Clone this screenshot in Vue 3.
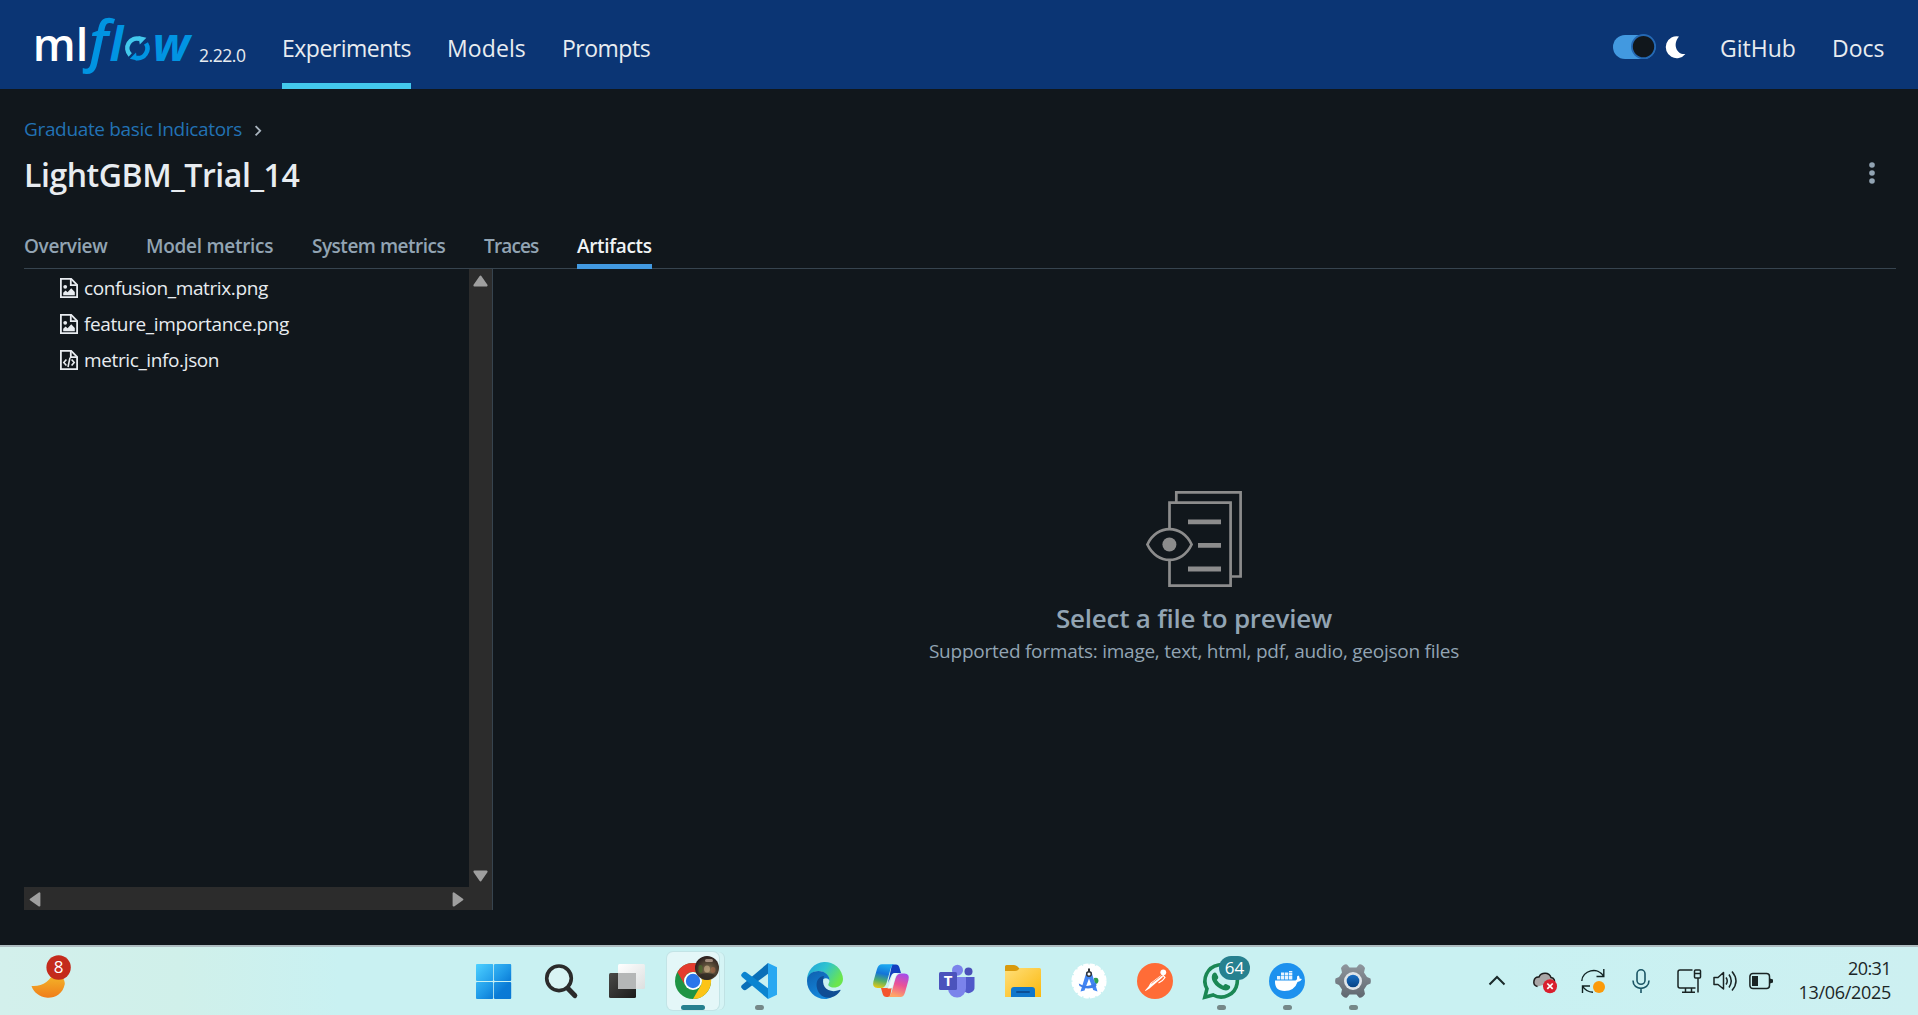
<script setup>
const nav = [
  { label: 'Experiments', cls: 'n-exp', active: true },
  { label: 'Models', cls: 'n-mod' },
  { label: 'Prompts', cls: 'n-pro' },
]
const tabs = [
  { label: 'Overview', cls: 't-ove' },
  { label: 'Model metrics', cls: 't-mod' },
  { label: 'System metrics', cls: 't-sys' },
  { label: 'Traces', cls: 't-tra' },
  { label: 'Artifacts', cls: 't-art', active: true },
]
const files = [
  { name: 'confusion_matrix.png', kind: 'image' },
  { name: 'feature_importance.png', kind: 'image' },
  { name: 'metric_info.json', kind: 'code' },
]
</script>

<template>
  <div class="screen">
    <header class="topbar">
      <svg class="logo" width="166" height="89" viewBox="30 0 166 89">
        <text class="lg ml" x="32.8" y="60.7" textLength="55.5" lengthAdjust="spacingAndGlyphs">ml</text>
        <text class="lg f" x="89" y="61.2">f</text>
        <text class="lg l" x="109.5" y="60.7">l</text>
        <g fill="none" stroke-width="4.6">
          <path d="M130.2 55A9.7 9.7 0 0 1 140 38.9" stroke="#43c9ed" />
          <path d="M146 43.4A9.7 9.7 0 0 1 135.8 57.9" stroke="#0194e2" />
        </g>
        <path d="M138.4 36L146.4 37.8L139.8 44.4z" fill="#43c9ed" />
        <path d="M137.2 60.6L129.8 58.8L136 52.4z" fill="#0194e2" />
        <text class="lg w" x="152.5" y="60.7" textLength="37.4" lengthAdjust="spacingAndGlyphs">w</text>
      </svg>
      <span class="version">2.22.0</span>
      <nav class="nav">
        <a v-for="n in nav" :key="n.label" :class="[n.cls, { active: n.active }]">{{ n.label }}</a>
      </nav>
      <div class="right">
        <svg width="74" height="89" viewBox="1612 0 74 89">
          <rect x="1613" y="35" width="42.5" height="24" rx="12" fill="#4299e0" />
          <circle cx="1643.5" cy="46.6" r="11.6" fill="#11171c" stroke="#2468b3" stroke-width="1.8" />
          <path d="M1679 36.4A11 11 0 1 0 1685.4 54C1677 55.2 1672 44.2 1679 36.4z" fill="#fff" />
        </svg>
        <a class="n-git">GitHub</a>
        <a class="n-doc">Docs</a>
      </div>
    </header>

    <main class="page">
      <div class="crumb">
        <a>Graduate basic Indicators</a>
        <svg width="8" height="12" viewBox="0 0 8 12"><path d="M1.6 1.2L6.2 5.8L1.6 10.4" fill="none" stroke="#aab5bf" stroke-width="1.8" /></svg>
      </div>
      <div class="title-row">
        <h1>LightGBM_Trial_14</h1>
        <svg class="kebab" width="8" height="24" viewBox="0 0 8 24" fill="#92a4b3"><circle cx="4" cy="4" r="2.8" /><circle cx="4" cy="12" r="2.8" /><circle cx="4" cy="20" r="2.8" /></svg>
      </div>
      <div class="tabs">
        <a v-for="t in tabs" :key="t.label" :class="[t.cls, { active: t.active }]">{{ t.label }}</a>
      </div>

      <section class="split">
        <div class="tree">
          <div class="tree-main">
            <ul>
              <li v-for="f in files" :key="f.name">
                <svg width="18" height="20" viewBox="0 0 18 20" fill="none" stroke="#e8ecf0" stroke-width="1.8">
                  <path d="M0.9 0.9H11.2L17.1 6.8V19.1H0.9z" />
                  <path d="M10.8 1V7.2H17" />
                  <template v-if="f.kind === 'image'">
                    <path d="M3.2 17.2V14.8L5.6 12.6L7.6 14.2L11.2 10.2L14.8 14V17.2z" fill="#e8ecf0" stroke="none" />
                    <circle cx="5.2" cy="8.8" r="1.9" fill="#e8ecf0" stroke="none" />
                  </template>
                  <path v-else d="M6.4 9.4L3.8 12.4L6.4 15.4M11.6 9.4L14.2 12.4L11.6 15.4M10 7.6L8 17" stroke-width="1.6" />
                </svg>
                <span>{{ f.name }}</span>
              </li>
            </ul>
            <div class="vbar">
              <svg width="15" height="12" viewBox="0 0 15 12"><path d="M7.5 1.6L13.6 10.4H1.4z" /></svg>
              <svg width="15" height="12" viewBox="0 0 15 12"><path d="M7.5 10.4L13.6 1.6H1.4z" /></svg>
            </div>
          </div>
          <div class="hbar">
            <svg width="12" height="15" viewBox="0 0 12 15"><path d="M1.6 7.5L10.4 1.4V13.6z" /></svg>
            <svg width="12" height="15" viewBox="0 0 12 15"><path d="M10.4 7.5L1.6 1.4V13.6z" /></svg>
          </div>
        </div>

        <div class="preview">
          <svg width="96" height="96" viewBox="0 0 96 96" fill="none" stroke="#8c8c8c" stroke-width="2.7">
            <path d="M30.3 11V1.4H94.6V85.5H86" />
            <path d="M23.5 38V11.7H84.6V94.6H23.5V69" />
            <path d="M1.4 53.5C11 33 36 33 45.6 53.5C36 74 11 74 1.4 53.5z" />
            <circle cx="23.4" cy="53.5" r="7" fill="#8c8c8c" stroke="none" />
            <path d="M42 30.8H75M52 54.4H75M42 78H75" stroke-width="4.8" />
          </svg>
          <h2>Select a file to preview</h2>
          <p>Supported formats: image, text, html, pdf, audio, geojson files</p>
        </div>
      </section>
    </main>

    <footer class="taskbar">
      <div class="weather">
        <svg width="48" height="48" viewBox="28 953 48 48">
          <defs>
            <linearGradient id="moon" x1="0" y1="0" x2="0" y2="1"><stop offset="0" stop-color="#f3c02c" /><stop offset="1" stop-color="#f07d1a" /></linearGradient>
          </defs>
          <path d="M31.5 986C42 987 51 981 54 971C62 974 65 980 64.8 984C63 994 55 998 47.5 997.7C39 997 33.5 992 31.5 986z" fill="url(#moon)" />
          <circle cx="58.6" cy="967.5" r="12.2" fill="#c42b1c" />
          <text x="58.6" y="973" class="b8">8</text>
        </svg>
      </div>

      <div class="apps">
        <div class="cell">
          <svg width="36" height="36" viewBox="0 0 36 36">
            <defs>
              <linearGradient id="win" gradientUnits="userSpaceOnUse" x1="0" y1="1" x2="34" y2="36"><stop offset="0" stop-color="#4ccfff" /><stop offset=".5" stop-color="#1f9ae8" /><stop offset=".75" stop-color="#0a7bd6" /><stop offset="1" stop-color="#0a78d4" /></linearGradient>
            </defs>
            <g fill="url(#win)"><rect x="-1" y="1" width="17.2" height="17" rx="1" /><rect x="17" y="1" width="17.2" height="17" rx="1" /><rect x="-1" y="19" width="17.2" height="17" rx="1" /><rect x="17" y="19" width="17.2" height="17" rx="1" /></g>
          </svg>
        </div>
        <div class="cell">
          <svg width="36" height="36" viewBox="0 0 36 36" fill="none" stroke="#2b2b2b">
            <path d="M24.5 25L31.8 32.6" stroke-width="5" stroke-linecap="round" />
            <circle cx="16" cy="15.3" r="12.3" stroke-width="3.6" fill="#dff5f5" fill-opacity=".7" />
          </svg>
        </div>
        <div class="cell">
          <svg width="36" height="36" viewBox="0 0 36 36">
            <defs>
              <linearGradient id="tv" x1="0" y1="0" x2="1" y2="1"><stop offset="0" stop-color="#4a4a48" /><stop offset="1" stop-color="#1b1b1a" /></linearGradient>
              <linearGradient id="tw" x1="0" y1="0" x2="1" y2="1"><stop offset="0" stop-color="#fff" /><stop offset="1" stop-color="#dcdfdf" /></linearGradient>
            </defs>
            <rect x="0" y="10" width="27" height="25" rx="1.5" fill="url(#tv)" />
            <rect x="9" y="1" width="27" height="25" rx="1.5" fill="url(#tw)" />
            <rect x="9" y="10" width="18" height="16" fill="#b5b7b7" />
          </svg>
        </div>
        <div class="cell current">
          <svg width="36" height="36" viewBox="0 0 36 36">
            <defs>
              <radialGradient id="ph" cx=".55" cy=".6" r=".6"><stop offset="0" stop-color="#8f7c58" /><stop offset=".45" stop-color="#5a4c38" /><stop offset="1" stop-color="#2a1d1d" /></radialGradient>
            </defs>
            <circle cx="18" cy="18" r="18" fill="#1e9444" />
            <path d="M2.4 9A18 18 0 0 1 33.6 9H18A9 9 0 0 0 10.2 22.5z" fill="#e33b2e" />
            <path d="M33.6 9A18 18 0 0 1 18 36L25.8 22.5A9 9 0 0 0 18 9z" fill="#fcc417" />
            <circle cx="18" cy="18" r="9" fill="#fff" />
            <circle cx="18" cy="18" r="7.2" fill="#2b76ea" />
            <circle cx="32" cy="5" r="12" fill="url(#ph)" />
            <rect x="23.5" y="2" width="4" height="8" rx="2" fill="#4c7a2c" opacity=".6" />
            <rect x="30" y="-4" width="8" height="3" rx="1.5" fill="#e2c8b8" opacity=".6" />
            <ellipse cx="32" cy="6" rx="3" ry="3.5" fill="#c5a885" opacity=".7" />
            <ellipse cx="38" cy="7" rx="2.5" ry="3" fill="#a8694a" opacity=".6" />
            <path d="M24 12Q32 8 40 12Q36 17 32 17Q27 17 24 12z" fill="#2a2420" opacity=".75" />
          </svg>
          <i class="bar"></i>
        </div>
        <div class="cell">
          <svg width="36" height="36" viewBox="0 0 36 36">
            <path d="M27 0L28 10L5.5 26.6Q3.5 28 1.5 26L.6 25Q-.5 23.5 1 22z" fill="#0a6fb8" />
            <path d="M27 36L28 26L5.500 9.400Q3.500 8 1.500 10L.6 11Q-.5 12.500 1 14z" fill="#0b84d0" />
            <path d="M27 0L36 4.200V31.800L27 36z" fill="#29a8f2" />
          </svg>
          <i></i>
        </div>
        <div class="cell">
          <svg width="36" height="36" viewBox="0 0 36 36">
            <defs>
              <linearGradient id="e1" x1="0" y1="0" x2="1" y2=".5"><stop offset="0" stop-color="#1fa0dc" /><stop offset=".5" stop-color="#2fc4cf" /><stop offset="1" stop-color="#6be64c" /></linearGradient>
              <linearGradient id="e2" x1="0" y1="0" x2=".5" y2="1"><stop offset="0" stop-color="#0e5fae" /><stop offset="1" stop-color="#1488dc" /></linearGradient>
            </defs>
            <path d="M0 18A18 18 0 0 1 36 16C36 22 31 24.500 27 24.500C23 24.500 20.500 22.500 21.500 21C25 15 19 8 11.500 8C6 8 1 12 0 18z" fill="url(#e1)" />
            <path d="M0 18C0 12 5 8 11.500 8C18 8 23 12.500 22.500 18C22 14.500 15.500 13.500 14 20C12.500 27 19 34 25 34C22 35.500 20 36 18 36C8 36 0 28 0 18z" fill="url(#e2)" />
            <path d="M17 13C8 14 8 25 13 31C18 37 28 36 33.500 27.500C33.700 26.500 33 26.500 32.500 27C22 31 13 24 17 13z" fill="#0f4d94" />
          </svg>
        </div>
        <div class="cell">
          <svg width="36" height="36" viewBox="0 0 36 36">
            <defs>
              <linearGradient id="c1" x1=".3" y1="0" x2=".1" y2="1"><stop offset="0" stop-color="#1ba5ef" /><stop offset=".35" stop-color="#1474d8" /><stop offset=".65" stop-color="#4fae6a" /><stop offset="1" stop-color="#f7cc0b" /></linearGradient>
              <linearGradient id="c2" x1=".8" y1="0" x2=".5" y2="1"><stop offset="0" stop-color="#a04bee" /><stop offset=".5" stop-color="#ea5197" /><stop offset="1" stop-color="#ffa566" /></linearGradient>
            </defs>
            <path d="M19 1.500H23Q25.500 1.500 26.400 4.500L28 10H22Q19 10 18 13L15 20z" fill="#123fc0" />
            <path d="M17 34H13.500Q10.500 34 9.700 31L8 25H14Q17 25 18 22L20 17z" fill="#f4552f" />
            <path d="M9 1.300H21.500Q18.500 2 17.500 6L13.500 20Q12 25 8 25H4.500Q-1.200 25 .4 18.500L4 6Q5.300 1.300 9 1.300z" fill="url(#c1)" />
            <path d="M27.500 34H15Q17.500 33 18.500 29.500L22.500 15.500Q24 10.500 28 10.500H31.500Q37 10.500 35.500 17L32 29.500Q30.700 34 27.500 34z" fill="url(#c2)" />
            <path d="M19.500 11.500Q20.300 10 22 10H24.500Q22.800 12 22 15L19.500 24Q18.800 25.500 17 25.500H14.500Q16 23.500 16.800 20.500z" fill="#eefafa" />
          </svg>
        </div>
        <div class="cell">
          <svg width="36" height="36" viewBox="0 0 36 36">
            <circle cx="29.500" cy="8.500" r="4" fill="#4a50b8" />
            <path d="M25 14H35.500V23.500A6 6 0 0 1 25 28z" fill="#5059c9" />
            <circle cx="18.500" cy="7.200" r="5.500" fill="#7b83eb" />
            <path d="M9 14H27V25A9 9 0 0 1 9 26z" fill="#7b83eb" />
            <rect x="0" y="9" width="18" height="18" rx="1.500" fill="#4b53bc" />
            <text x="9" y="23.300" class="teams-t">T</text>
          </svg>
        </div>
        <div class="cell">
          <svg width="36" height="36" viewBox="0 0 36 36">
            <defs>
              <linearGradient id="fo" x1="0" y1="0" x2="1" y2="1"><stop offset="0" stop-color="#ffdf7a" /><stop offset="1" stop-color="#fbb80c" /></linearGradient>
            </defs>
            <path d="M0 3.500Q0 2 1.500 2H9Q11 2 12.500 3.500L15 6H34V12H0z" fill="#d99a0c" />
            <path d="M0 8H10Q12 8 13.500 6.500L15 5H34.500Q36 5 36 6.500V34H0z" fill="url(#fo)" />
            <path d="M6 34V27Q6 24 9 24H27Q30 24 30 27V34z" fill="#0f77cc" />
            <rect x="11" y="28" width="14" height="2" rx="1" fill="#0a4f96" />
          </svg>
        </div>
        <div class="cell">
          <svg width="36" height="36" viewBox="0 0 36 36">
            <circle cx="18" cy="18" r="16.500" fill="#fff" stroke="#fff" stroke-width="2.200" stroke-dasharray="5.200 1.300" />
            <path d="M23 15Q27.500 13.500 27.500 18Q27 21.500 23.500 21z" fill="#2fa04e" />
            <path d="M15.500 9H20.500L26.500 28.600L22.200 27L18 15.500L13.500 27.500L9.500 28.600z" fill="#4285f4" />
            <path d="M7.800 20.500Q17 26 25 19.500L25.500 23Q17 28 8.500 23z" fill="#3c7be8" />
            <rect x="17" y="5.500" width="2" height="4" fill="#30343a" />
            <circle cx="18" cy="11" r="2.300" fill="#fff" stroke="#30343a" stroke-width="1.500" />
          </svg>
        </div>
        <div class="cell">
          <svg width="36" height="36" viewBox="0 0 36 36">
            <circle cx="18" cy="18" r="18" fill="#ff6c37" />
            <circle cx="26.300" cy="9.300" r="2.900" fill="#fff" />
            <path d="M23.500 12.500L13.500 20L11.500 23.500L8 27.500L8.500 28L12.500 25.500L16 22.500L26.500 13.500z" fill="#fff" />
            <path d="M14.500 20.500L24.500 12.800" stroke="#ff6c37" stroke-width=".7" />
            <path d="M25 11L28 14.500Q26 18 21.500 20" fill="none" stroke="#fff" stroke-width="1.200" />
          </svg>
        </div>
        <div class="cell">
          <svg width="36" height="36" viewBox="0 0 36 36">
            <path d="M1.800 34.200L4 25.800A16.200 16.200 0 1 1 10.200 32z" fill="none" stroke="#1a8754" stroke-width="3.600" />
            <path d="M10 10.500Q12 8.500 13.500 10.500L15.300 14Q15.500 15.500 13.800 17Q16 21 20.200 22.800Q21.800 20.500 23 21L27 23Q28 25 25.500 26.800Q22.500 28.500 17 25.500Q11 22 9.200 17Q8 13 10 10.500z" fill="#1a8754" />
            <rect x="16" y="-7" width="31" height="24" rx="12" fill="#26808f" />
            <text x="31.500" y="10.700" class="b64">64</text>
          </svg>
          <i></i>
        </div>
        <div class="cell">
          <svg width="36" height="36" viewBox="0 0 36 36">
            <circle cx="18" cy="18" r="18" fill="#1d91ee" />
            <path d="M6 17.500H26.500Q28.500 17 28 13.500L29.500 12.500Q31 14 30.500 15.500L33 16Q31.500 18.800 28.500 19Q25.500 28 15.500 28Q5.500 28 6 17.500z" fill="#fff" />
            <path d="M8 13H11.300V16.500H8zM12 13H15.300V16.500H12zM16 13H19.300V16.500H16zM20 13H23.300V16.500H20zM12 9.500H15.300V12.500H12zM16 9.500H19.300V12.500H16zM20 9.500H23.300V12.500H20zM20 8H23.300V9H20z" fill="#e6f3fe" />
          </svg>
          <i></i>
        </div>
        <div class="cell">
          <svg width="36" height="36" viewBox="0 0 36 36">
            <defs>
              <linearGradient id="ge" x1="0" y1="0" x2="0" y2="1"><stop offset="0" stop-color="#8f969d" /><stop offset="1" stop-color="#5f676f" /></linearGradient>
              <linearGradient id="gb" x1="0" y1="0" x2="0" y2="1"><stop offset="0" stop-color="#1a6fc4" /><stop offset="1" stop-color="#064384" /></linearGradient>
            </defs>
            <path d="M7.500 3Q9.500 .8 12 1.500L14.500 4.500H21.500L24 1.500Q26.500 .8 28.500 3L30 5L29 9.500L32 14L35.500 15.500Q36.300 18 35.500 20.500L32 22L29 26.500L30 31L28.500 33Q26.500 35.200 24 34.500L21.500 31.500H14.500L12 34.500Q9.500 35.200 7.500 33L6 31L7 26.500L4 22L.5 20.500Q-.3 18 .5 15.500L4 14L7 9.500L6 5z" fill="url(#ge)" />
            <circle cx="18" cy="18" r="9" fill="#dfe5e9" />
            <circle cx="18" cy="18" r="6.300" fill="url(#gb)" />
          </svg>
          <i></i>
        </div>
      </div>

      <div class="tray">
        <svg width="24" height="24" viewBox="0 0 24 24"><path d="M4.500 15.500L12 8L19.500 15.500" fill="none" stroke="#1a2a2a" stroke-width="2" /></svg>
        <svg class="g24" width="24" height="24" viewBox="0 0 24 24">
          <path d="M4.500 17.500C-1.500 16 .5 7.500 6 8C8 3.500 16 2.500 18 8.500C21.500 9 22 12 21 13" fill="#a9a6a6" stroke="#1c1c1c" stroke-width="1.500" />
          <circle cx="17" cy="17.200" r="7" fill="#d9202e" />
          <path d="M14.300 14.500L19.700 19.900M19.700 14.500L14.300 19.900" stroke="#fff" stroke-width="1.700" />
        </svg>
        <svg class="g24" width="24" height="24" viewBox="0 0 24 24" fill="none" stroke="#122" stroke-width="1.400">
          <path d="M.8 12C1 1.500 17 -3 22.800 7.500M22.800 0V7.500H15.500M1.500 24V17H9M1.500 17Q5 23 12 23.300" />
          <circle cx="18" cy="18" r="6" fill="#fb9a0a" stroke="none" />
        </svg>
        <svg class="g24" width="24" height="24" viewBox="0 0 24 24" fill="none" stroke="#1b5565" stroke-width="1.600">
          <rect x="8" y=".8" width="8" height="14.500" rx="4" /><path d="M4 11.500C4 22 20 22 20 11.500M12 19.300V24" />
        </svg>
        <svg class="g24" width="24" height="24" viewBox="0 0 24 24" fill="none" stroke="#1a2424" stroke-width="1.500">
          <path d="M15.500 1H3Q1 1 1 3V17Q1 19 3 19H18.500M8.500 19V23M14.500 19V23M5 23.200H18M21 9V23.500" />
          <rect x="17.500" y="1" width="6" height="8" rx="1" /><path d="M17.500 4.500H23.500" />
        </svg>
        <svg class="g12" width="24" height="24" viewBox="0 0 24 24" fill="none" stroke="#1a2424" stroke-width="1.500">
          <path d="M1 8.500H5L10.500 3.500V20L5 15.500H1z" stroke-linejoin="round" /><path d="M13 8.500Q15.500 12 13 15.500M16 5.500Q20.500 12 16 18.500M19 2.500Q27 12 19 21.500" />
        </svg>
        <svg class="g12" width="24" height="24" viewBox="0 0 24 24" fill="none" stroke="#1a2424" stroke-width="1.500">
          <rect x=".9" y="4.500" width="19.600" height="15" rx="3" /><rect x="3" y="7" width="6" height="10" fill="#1a2424" stroke="none" /><path d="M21 9.500L24 10.500V13.500L21 14.500z" fill="#1a2424" stroke="none" />
        </svg>
        <div class="clock"><span class="time">20:31</span><span>13/06/2025</span></div>
      </div>
    </footer>
  </div>
</template>

<style>
html, body { margin: 0; background: #11171c; overflow: hidden; }
</style>

<style scoped>
.screen { width: 1918px; height: 1015px; display: flex; flex-direction: column; background: #11171c; color: #e8ecf0; font-family: "Open Sans", "Noto Sans", sans-serif; overflow: hidden; }
svg { display: block; flex: none; overflow: visible; }

.topbar { height: 89px; flex: none; box-sizing: border-box; display: flex; padding: 0 33px 0 30px; background: #0b3574; }
.lg { font-family: "Open Sans", sans-serif; font-weight: 600; font-size: 46px; }
.ml { fill: #fff; }
.f, .l, .w { fill: #0194e2; font-style: italic; }
.f { font-size: 56.5px; }
.l, .w { font-weight: 700; }
.version { width: 49px; margin: 40px 0 0 3px; font-size: 17.5px; line-height: 30px; letter-spacing: -0.45px; }
.nav { display: flex; gap: 36px; margin-left: 34px; }
.topbar a { height: 89px; box-sizing: border-box; padding-top: 7px; font-size: 23px; line-height: 82px; white-space: nowrap; }
.nav .active { border-bottom: 6px solid #43c9ed; }
.n-exp { width: 129px; letter-spacing: -0.5px; }
.n-mod { width: 79px; letter-spacing: 0.1px; }
.n-pro { width: 89px; letter-spacing: -0.5px; }
.right { display: flex; margin-left: auto; }
.n-git { width: 76px; margin: 0 36px 0 34px; }
.n-doc { width: 53px; letter-spacing: 0; }

.page { flex: none; height: 856px; box-sizing: border-box; padding: 25px 22px 0 24px; display: flex; flex-direction: column; }
.crumb { display: flex; align-items: center; height: 30px; font-size: 19px; letter-spacing: -0.34px; color: #2272b4; white-space: nowrap; }
.crumb svg { margin: 3px 0 0 12px; }
.title-row { display: flex; justify-content: space-between; margin-top: 11px; height: 40px; }
h1 { margin: 0; font-size: 32px; font-weight: 600; line-height: 40px; letter-spacing: -0.45px; }
.kebab { margin: 6px 20px 0 0; }
.tabs { display: flex; gap: 38px; margin-top: 33px; height: 41px; box-sizing: border-box; border-bottom: 1px solid #37444f; }
.tabs a { height: 41px; box-sizing: border-box; font-size: 19px; font-weight: 600; line-height: 37px; color: #92a4b3; white-space: nowrap; }
.tabs .active { color: #f0f3f5; border-bottom: 5px solid #4299e0; }
.t-ove { width: 84px; letter-spacing: -0.35px; }
.t-mod { width: 128px; letter-spacing: -0.28px; }
.t-sys { width: 134px; letter-spacing: -0.5px; }
.t-tra { width: 55px; letter-spacing: -0.85px; }
.t-art { width: 75px; letter-spacing: -0.33px; }

.split { display: flex; height: 641px; }
.tree { width: 468px; border-right: 1px solid #37444f; display: flex; flex-direction: column; }
.tree-main { flex: 1; display: flex; justify-content: space-between; }
ul { list-style: none; margin: 0; padding: 1px 0 0 36px; }
li { display: flex; align-items: center; gap: 6px; height: 36px; font-size: 19px; letter-spacing: -0.38px; white-space: nowrap; }
.vbar { width: 23px; background: #2c2c2c; display: flex; flex-direction: column; justify-content: space-between; align-items: center; padding: 6px 0 5px; box-sizing: border-box; }
.hbar { height: 23px; background: #2c2c2c; display: flex; justify-content: space-between; align-items: center; padding: 1px 28px 0 5px; box-sizing: border-box; }
.vbar svg, .hbar svg { fill: #9f9f9f; stroke: #9f9f9f; stroke-width: 2; stroke-linejoin: round; }
.preview { flex: 1; display: flex; flex-direction: column; align-items: center; padding: 222px 0 0 0; margin-right: 23px; margin-left: 22px; }
h2 { margin: 13px 0 0; font-size: 26px; font-weight: 600; line-height: 36px; letter-spacing: -0.23px; color: #92a4b3; }
p { margin: 0; font-size: 19px; line-height: 30px; letter-spacing: -0.25px; color: #92a4b3; white-space: nowrap; }

.taskbar { flex: none; height: 70px; box-sizing: border-box; border-top: 2px solid #aebcc0; display: flex; background: linear-gradient(90deg, #d3f0ec 0, #d0f0ea 180px, #c9f1f2 340px, #c9f1f2 1500px, #cdf0f1 100%); }
.weather { width: 434px; padding: 6px 0 0 28px; }
.b8 { font: 500 17px "Open Sans", sans-serif; fill: #fff; text-anchor: middle; }
.b64 { font: 17px "Open Sans", sans-serif; fill: #fff; text-anchor: middle; }
.teams-t { font: 700 15px "Open Sans", sans-serif; fill: #fff; text-anchor: middle; }
.apps { display: flex; }
.cell { width: 66px; display: flex; flex-direction: column; align-items: center; padding-top: 16px; box-sizing: border-box; }
.cell i { width: 9px; height: 5px; margin-top: 6px; border-radius: 2.5px; background: #758888; }
.cell i.bar { width: 24px; background: #26808f; }
.current { width: 52px; height: 58px; margin: 5px 7px 0; padding-top: 11px; border-radius: 6px; background: #e4f7f8; box-shadow: 0 0 0 1px #c3e4e6, 5px 0 0 0 #d5f4f5, 6px 0 0 0 #c0e2e4; }
.tray { display: flex; align-items: flex-start; margin-left: auto; padding: 22px 27px 0 0; }
.g24 { margin-left: 24px; }
.g12 { margin-left: 12px; }
.clock { width: 118px; margin-top: -13px; display: flex; flex-direction: column; align-items: flex-end; font-size: 18px; line-height: 24px; letter-spacing: -0.3px; color: #1b2626; }
.time { letter-spacing: -0.6px; }
</style>
